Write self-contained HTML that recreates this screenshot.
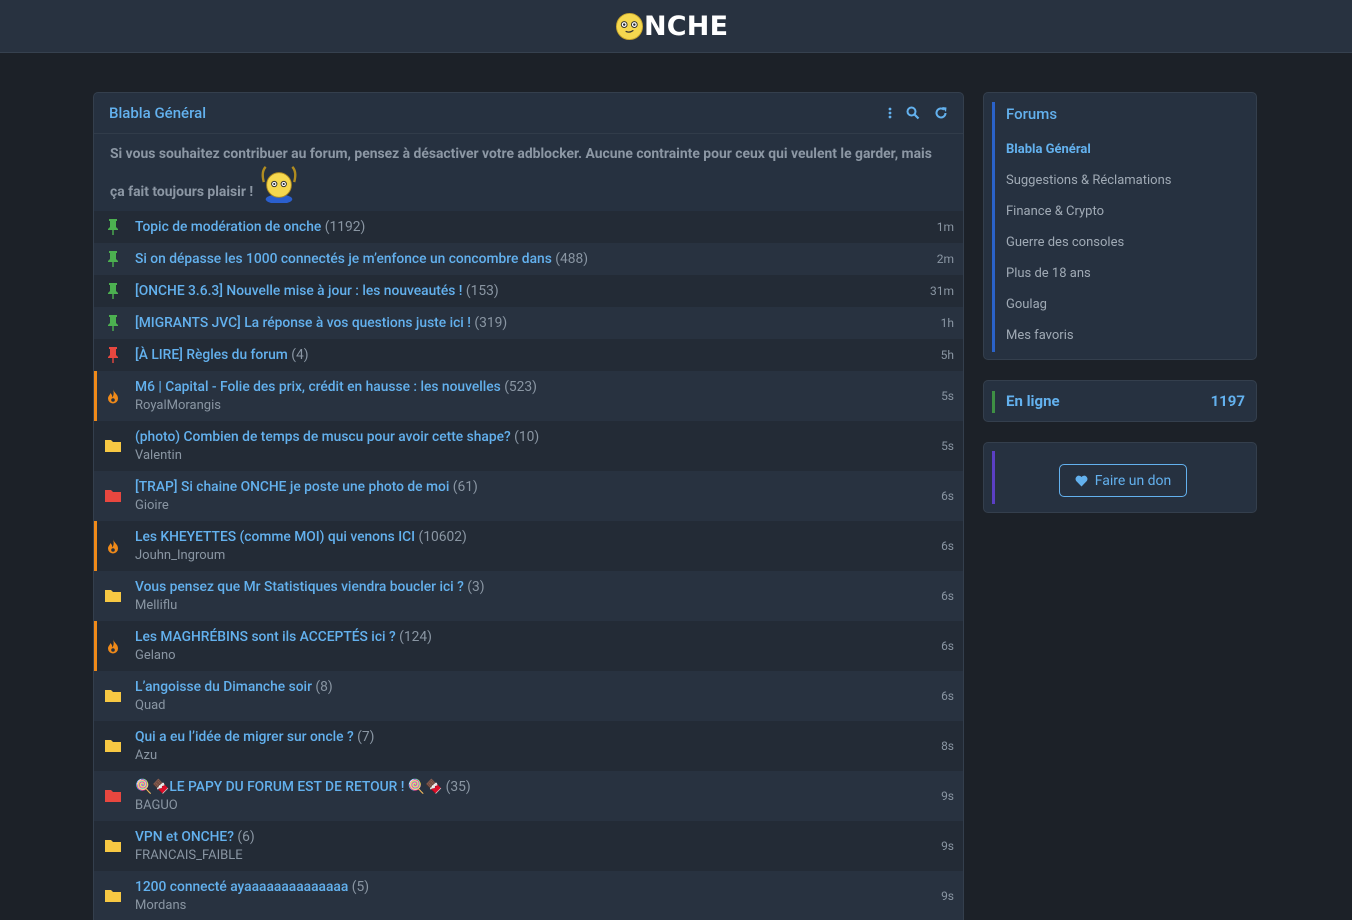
<!DOCTYPE html>
<html><head><meta charset="utf-8"><style>
*{box-sizing:border-box;margin:0;padding:0}
html,body{width:1352px;height:920px;overflow:hidden}
body{background:#1c2128;font-family:"Roboto","Liberation Sans",sans-serif;color:#9aa5b1;position:relative}
.top{position:absolute;left:0;top:0;width:1352px;height:53px;background:#283240;border-bottom:1px solid #36414f}
.logo{position:absolute;left:615px;top:10px;height:32px;display:flex;align-items:center;font-weight:900;font-size:27px;color:#fff;letter-spacing:0.2px;font-family:"DejaVu Sans","Liberation Sans",sans-serif}
.main{position:absolute;left:93px;top:92px;width:871px;height:828px;background:#263140;border:1px solid #343f4d;border-bottom:none;border-radius:5px 5px 0 0;overflow:hidden}
.hd{height:41px;border-bottom:1px solid #313c4a;padding:0 15px;display:flex;align-items:center;color:#63b1ee;font-size:15px;font-weight:500}
.hd .ic{margin-left:auto;display:flex;gap:14px;align-items:center}
.note{height:77px;padding:11px 16px 0;color:#8c97a4;font-size:13.9px;font-weight:700;white-space:nowrap}
.note p{line-height:18px}
.row{display:flex;align-items:center;position:relative;padding-left:41px;font-size:13.8px}
.row.s{height:32px}
.row.d{height:50px;flex-direction:column;align-items:flex-start;justify-content:center}
.row:nth-child(odd){background:#232b36}
.row:nth-child(even){background:#283240}
.t{color:#63b1ee;font-weight:500;line-height:18px}
.t span{color:#8a96a3;font-weight:400}
.u{color:#8a96a3;font-size:13px;line-height:18px;margin-top:1px}
.tm{position:absolute;right:9px;top:50%;transform:translateY(-50%);font-size:12px;color:#8a96a3}
.icn{position:absolute;left:10px;top:50%;transform:translateY(-50%);width:18px;height:18px}
.hot{border-left:3px solid #f08a19;padding-left:38px}
.hot .icn{left:7px}
.side{position:absolute;left:983px;width:274px;background:#263140;border:1px solid #343f4d;border-radius:5px}
.bar{position:absolute;left:8px;width:3px}
.f a{display:block;color:#a0aab5;font-size:13px;height:31px;line-height:31px;text-decoration:none}
</style></head><body>
<div class="top"><div class="logo"><svg width="29" height="29" viewBox="0 0 30 30"><circle cx="15" cy="15" r="13.5" fill="#f5d84f" stroke="#caa82e" stroke-width="1"/><circle cx="9.5" cy="13" r="3" fill="#fff" stroke="#333" stroke-width="1"/><circle cx="20" cy="13" r="3" fill="#fff" stroke="#333" stroke-width="1"/><circle cx="9.5" cy="13" r="1.2" fill="#222"/><circle cx="20" cy="13" r="1.2" fill="#222"/><path d="M11 20 Q15 22 19 19" stroke="#333" stroke-width="1.3" fill="none"/></svg>NCHE</div></div>

<div class="main">
<div class="hd">Blabla Général<div class="ic">
<svg width="4" height="12"><circle cx="2" cy="2" r="1.4" fill="#63b1ee"/><circle cx="2" cy="6" r="1.4" fill="#63b1ee"/><circle cx="2" cy="10" r="1.4" fill="#63b1ee"/></svg>
<svg width="14" height="14" viewBox="0 0 14 14"><circle cx="5.5" cy="5.5" r="4" stroke="#63b1ee" stroke-width="2" fill="none"/><path d="M8.5 8.5 L12.5 12.5" stroke="#63b1ee" stroke-width="2.2"/></svg>
<svg width="14" height="14" viewBox="0 0 14 14"><path d="M11.5 7 A4.5 4.5 0 1 1 10 3.6" stroke="#63b1ee" stroke-width="2" fill="none"/><path d="M8 1 L12.5 1.5 L12 6 Z" fill="#63b1ee"/></svg>
</div></div>
<div class="note"><p>Si vous souhaitez contribuer au forum, pensez à désactiver votre adblocker. Aucune contrainte pour ceux qui veulent le garder, mais</p>
<div style="margin-top:0px;display:flex;align-items:flex-end;height:40px"><span style="line-height:18px;margin-bottom:2px">ça fait toujours plaisir !&nbsp;</span><svg width="44" height="38" viewBox="0 0 44 40"><ellipse cx="22" cy="36" rx="14" ry="5" fill="#2a5fcf"/><circle cx="22" cy="21" r="13" fill="#f5d84f" stroke="#b08c20"/><path d="M6 18 Q3 7 8 2 M38 18 Q41 7 36 2" stroke="#b08c20" stroke-width="2.5" fill="none"/><circle cx="17" cy="20" r="2.8" fill="#fff" stroke="#333"/><circle cx="27" cy="20" r="2.8" fill="#fff" stroke="#333"/><circle cx="17" cy="20" r="1.1" fill="#222"/><circle cx="27" cy="20" r="1.1" fill="#222"/></svg></div></div>
<div>
<div class="row s"><svg class="icn" viewBox="0 0 18 18"><path d="M5 1h8v2h-1v6l2 2v1H4v-1l2-2V3H5z M8.3 12h1.4v5H8.3z" fill="#4cb050"/></svg><div class="t">Topic de modération de onche <span>(1192)</span></div><div class="tm">1m</div></div>
<div class="row s"><svg class="icn" viewBox="0 0 18 18"><path d="M5 1h8v2h-1v6l2 2v1H4v-1l2-2V3H5z M8.3 12h1.4v5H8.3z" fill="#4cb050"/></svg><div class="t">Si on dépasse les 1000 connectés je m’enfonce un concombre dans <span>(488)</span></div><div class="tm">2m</div></div>
<div class="row s"><svg class="icn" viewBox="0 0 18 18"><path d="M5 1h8v2h-1v6l2 2v1H4v-1l2-2V3H5z M8.3 12h1.4v5H8.3z" fill="#4cb050"/></svg><div class="t">[ONCHE 3.6.3] Nouvelle mise à jour : les nouveautés ! <span>(153)</span></div><div class="tm">31m</div></div>
<div class="row s"><svg class="icn" viewBox="0 0 18 18"><path d="M5 1h8v2h-1v6l2 2v1H4v-1l2-2V3H5z M8.3 12h1.4v5H8.3z" fill="#4cb050"/></svg><div class="t">[MIGRANTS JVC] La réponse à vos questions juste ici ! <span>(319)</span></div><div class="tm">1h</div></div>
<div class="row s"><svg class="icn" viewBox="0 0 18 18"><path d="M5 1h8v2h-1v6l2 2v1H4v-1l2-2V3H5z M8.3 12h1.4v5H8.3z" fill="#e8473f"/></svg><div class="t">[À LIRE] Règles du forum <span>(4)</span></div><div class="tm">5h</div></div>
<div class="row d hot"><svg class="icn" viewBox="0 0 18 18"><path d="M9 2 C10 6 14 7 14 11.5 A5 5 0 0 1 4 11.5 C4 9 6 8 6.5 6 C8 8 8.5 9 8 10.5 C10 9 10 5 9 2Z" fill="#f08a19"/><circle cx="9" cy="13" r="1.8" fill="#263140"/></svg><div class="t">M6 | Capital - Folie des prix, crédit en hausse : les nouvelles <span>(523)</span></div><div class="u">RoyalMorangis</div><div class="tm">5s</div></div>
<div class="row d"><svg class="icn" viewBox="0 0 18 18"><path d="M1 3h6l2 2h8v10H1z" fill="#f7c843"/></svg><div class="t">(photo) Combien de temps de muscu pour avoir cette shape? <span>(10)</span></div><div class="u">Valentin</div><div class="tm">5s</div></div>
<div class="row d"><svg class="icn" viewBox="0 0 18 18"><path d="M1 3h6l2 2h8v10H1z" fill="#e8473f"/></svg><div class="t">[TRAP] Si chaine ONCHE je poste une photo de moi <span>(61)</span></div><div class="u">Gioire</div><div class="tm">6s</div></div>
<div class="row d hot"><svg class="icn" viewBox="0 0 18 18"><path d="M9 2 C10 6 14 7 14 11.5 A5 5 0 0 1 4 11.5 C4 9 6 8 6.5 6 C8 8 8.5 9 8 10.5 C10 9 10 5 9 2Z" fill="#f08a19"/><circle cx="9" cy="13" r="1.8" fill="#263140"/></svg><div class="t">Les KHEYETTES (comme MOI) qui venons ICI <span>(10602)</span></div><div class="u">Jouhn_Ingroum</div><div class="tm">6s</div></div>
<div class="row d"><svg class="icn" viewBox="0 0 18 18"><path d="M1 3h6l2 2h8v10H1z" fill="#f7c843"/></svg><div class="t">Vous pensez que Mr Statistiques viendra boucler ici ? <span>(3)</span></div><div class="u">Melliflu</div><div class="tm">6s</div></div>
<div class="row d hot"><svg class="icn" viewBox="0 0 18 18"><path d="M9 2 C10 6 14 7 14 11.5 A5 5 0 0 1 4 11.5 C4 9 6 8 6.5 6 C8 8 8.5 9 8 10.5 C10 9 10 5 9 2Z" fill="#f08a19"/><circle cx="9" cy="13" r="1.8" fill="#263140"/></svg><div class="t">Les MAGHRÉBINS sont ils ACCEPTÉS ici ? <span>(124)</span></div><div class="u">Gelano</div><div class="tm">6s</div></div>
<div class="row d"><svg class="icn" viewBox="0 0 18 18"><path d="M1 3h6l2 2h8v10H1z" fill="#f7c843"/></svg><div class="t">L’angoisse du Dimanche soir <span>(8)</span></div><div class="u">Quad</div><div class="tm">6s</div></div>
<div class="row d"><svg class="icn" viewBox="0 0 18 18"><path d="M1 3h6l2 2h8v10H1z" fill="#f7c843"/></svg><div class="t">Qui a eu l’idée de migrer sur oncle ? <span>(7)</span></div><div class="u">Azu</div><div class="tm">8s</div></div>
<div class="row d"><svg class="icn" viewBox="0 0 18 18"><path d="M1 3h6l2 2h8v10H1z" fill="#e8473f"/></svg><div class="t">🍭🍫LE PAPY DU FORUM EST DE RETOUR ! 🍭🍫 <span>(35)</span></div><div class="u">BAGUO</div><div class="tm">9s</div></div>
<div class="row d"><svg class="icn" viewBox="0 0 18 18"><path d="M1 3h6l2 2h8v10H1z" fill="#f7c843"/></svg><div class="t">VPN et ONCHE? <span>(6)</span></div><div class="u">FRANCAIS_FAIBLE</div><div class="tm">9s</div></div>
<div class="row d"><svg class="icn" viewBox="0 0 18 18"><path d="M1 3h6l2 2h8v10H1z" fill="#f7c843"/></svg><div class="t">1200 connecté ayaaaaaaaaaaaaaa <span>(5)</span></div><div class="u">Mordans</div><div class="tm">9s</div></div>
</div>
</div>

<div class="side f" style="top:92px;height:268px;padding:12px 0 0 22px">
<div class="bar" style="top:9px;height:250px;background:#2a62c9"></div>
<div style="color:#63b1ee;font-size:15px;font-weight:500;height:29px">Forums</div>
<a style="color:#63b1ee;font-weight:700">Blabla Général</a>
<a>Suggestions &amp; Réclamations</a><a>Finance &amp; Crypto</a><a>Guerre des consoles</a><a>Plus de 18 ans</a><a>Goulag</a><a>Mes favoris</a>
</div>
<div class="side" style="top:380px;height:42px;display:flex;align-items:center;padding:0 11px 0 22px;color:#63b1ee;font-size:15px;font-weight:700">
<div class="bar" style="top:10px;height:22px;background:#3e8f44"></div>En ligne<span style="margin-left:auto">1197</span></div>
<div class="side" style="top:442px;height:71px">
<div class="bar" style="top:8px;height:53px;background:#5b3fc4"></div>
<div style="position:absolute;left:75px;top:21px;width:128px;height:33px;border:1px solid #63b1ee;border-radius:5px;color:#63b1ee;font-size:14px;display:flex;align-items:center;justify-content:center;gap:7px"><svg width="13" height="12" viewBox="0 0 13 12"><path d="M6.5 11.5 L1.2 6 A3 3 0 0 1 6.5 2 A3 3 0 0 1 11.8 6Z" fill="#63b1ee"/></svg>Faire un don</div>
</div>
</body></html>
